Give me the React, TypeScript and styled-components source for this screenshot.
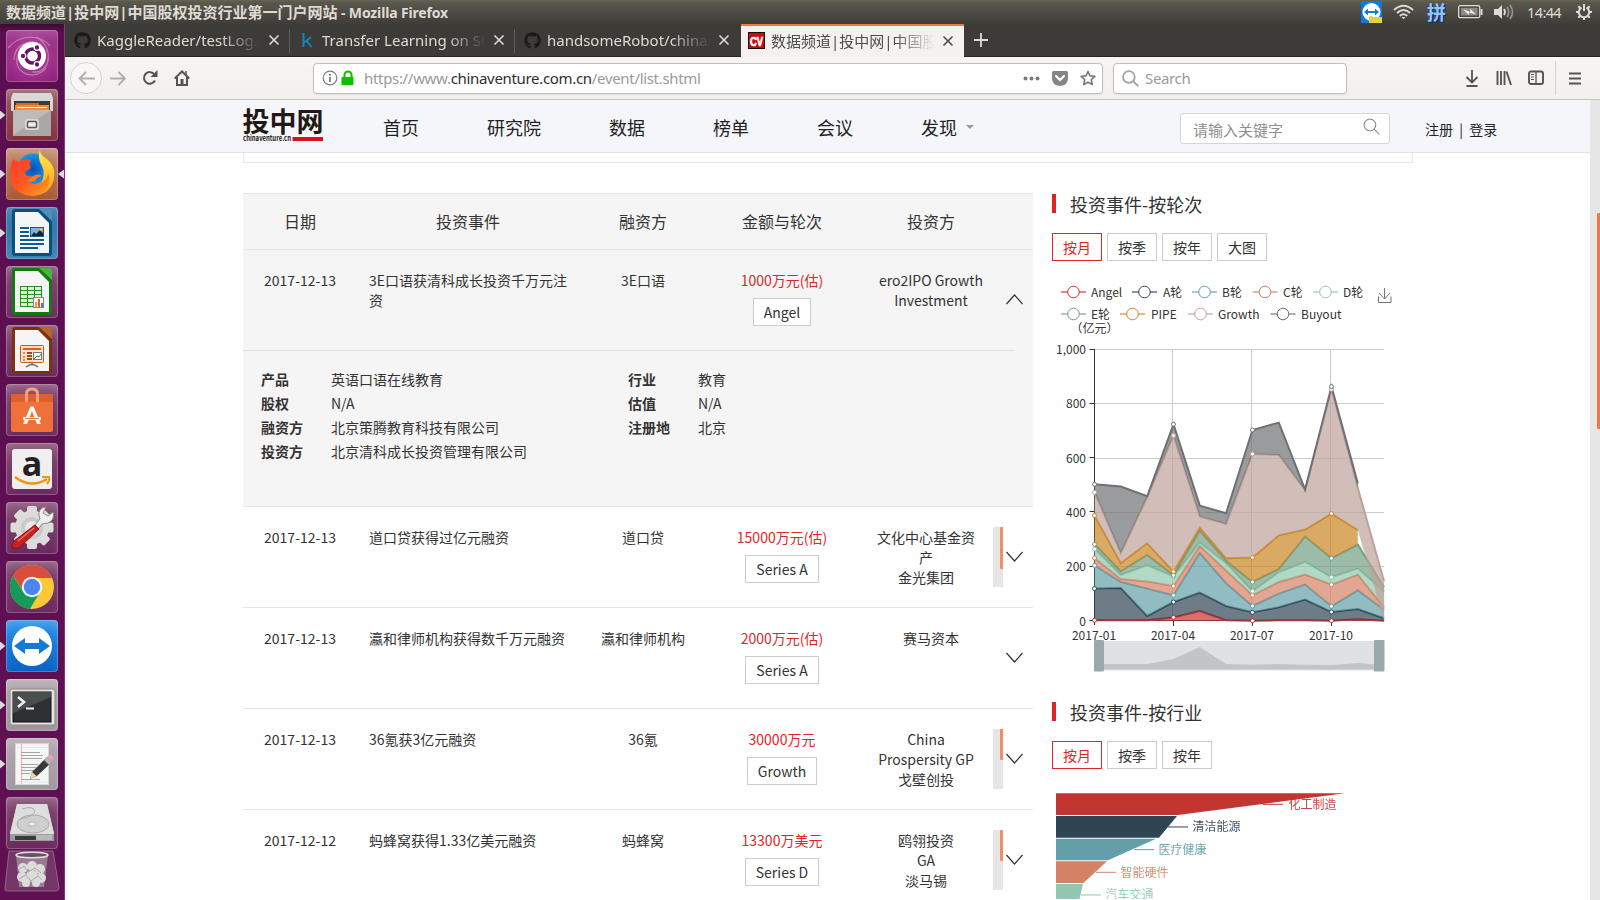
import React from "react";
import styled, { createGlobalStyle } from "styled-components";
import { FaGithub } from "react-icons/fa";

const webFont = `"Noto Sans CJK SC", "Noto Sans", sans-serif`;
const uiFont = `"Noto Sans", "Noto Sans CJK SC", sans-serif`;

const GlobalStyle = createGlobalStyle`
  * { box-sizing: border-box; }
  body { margin: 0; overflow: hidden; background: #fff; font-family: ${webFont}; color: #333; }
  ul, dl, dd, h2 { margin: 0; padding: 0; list-style: none; }
  svg { display: block; flex: none; }
`;

const Desktop = styled.div`
  width: 1600px;
  height: 900px;
  display: flex;
  flex-direction: column;
  overflow: hidden;
`;

/* ---------- system panel ---------- */

const Panel = styled.header`
  height: 24px;
  flex: none;
  display: flex;
  align-items: center;
  justify-content: space-between;
  padding: 0 8px 0 6px;
  background: linear-gradient(#68654f 0, #5b5850 2px, #3f3d38 100%);
  color: #dfdbd2;
  font-family: ${uiFont};
`;

const WindowTitle = styled.div`
  font-size: 15px;
  font-weight: 700;
  line-height: 24px;
  white-space: pre;
`;

const TitleLatin = styled.span`
  font-size: 14px;
  letter-spacing: -0.15px;
`;

const Tray = styled.div`
  display: flex;
  align-items: center;
  height: 24px;
`;

const TrayItem = styled.div<{ $gap: number }>`
  margin-left: ${(p) => p.$gap}px;
  display: flex;
`;

const InputMethod = styled.span`
  font: 700 19px/22px "Noto Sans CJK SC", sans-serif;
  color: #8cc6ff;
  text-shadow: 1px 1px 0 #0a2a80;
`;

const Clock = styled.span`
  font-size: 14.5px;
  line-height: 24px;
  letter-spacing: -0.6px;
  width: 36px;
`;

const Workspace = styled.div`
  flex: 1;
  display: flex;
  min-height: 0;
`;

/* ---------- launcher ---------- */

const Launcher = styled.nav`
  width: 65px;
  flex: none;
  display: flex;
  flex-direction: column;
  align-items: flex-start;
  gap: 7px;
  padding: 6px 0 0;
  background: linear-gradient(#3a0c33 0, #5c0f50 8px, #5f1053 100%);
  border-right: 1px solid #7d3b72;
`;

const LauncherSlot = styled.div`
  display: flex;
  align-items: center;
  width: 64px;
  height: 52px;
  flex: none;
`;

const RunningMark = styled.i<{ $on?: boolean; $right?: boolean }>`
  width: 6px;
  height: 9px;
  background: ${(p) => (p.$on ? "#dcdcdc" : "transparent")};
  clip-path: ${(p) => (p.$right ? "polygon(100% 0, 100% 100%, 0 50%)" : "polygon(0 0, 0 100%, 90% 50%)")};
`;

const Tile = styled.div<{ $bg: string }>`
  width: 52px;
  height: 52px;
  border-radius: 4px;
  background: ${(p) => p.$bg};
  box-shadow: inset 0 0 0 1px rgba(255, 255, 255, 0.22), inset 0 10px 14px -6px rgba(255, 255, 255, 0.28);
`;

const TrashTile = styled.div`
  width: 56px;
  height: 42px;
  margin: -6px 0 0 4px;
  flex: none;
`;

/* ---------- browser ---------- */

const Browser = styled.main`
  flex: 1;
  min-width: 0;
  display: flex;
  flex-direction: column;
  background: #fff;
`;

const TabStrip = styled.div`
  height: 33px;
  flex: none;
  display: flex;
  background: #3c3b37;
  border-bottom: 1px solid #262522;
  font-family: ${uiFont};
`;

const Tab = styled.div<{ $active?: boolean; $line?: boolean }>`
  position: relative;
  width: ${(p) => (p.$active ? 223 : 225)}px;
  height: ${(p) => (p.$active ? 33 : 32)}px;
  margin-left: ${(p) => (p.$active ? 1 : 0)}px;
  padding: ${(p) => (p.$active ? "0 0 0 7px" : "0 0 0 9px")};
  display: flex;
  align-items: center;
  background: ${(p) => (p.$active ? "#f3f2f0" : "transparent")};
  box-shadow: ${(p) => (p.$active ? "inset 0 2px 0 #f07746" : "none")};
  color: ${(p) => (p.$active ? "#4c4c4c" : "#dfdbd2")};
  &::after {
    content: "";
    display: ${(p) => (p.$line ? "block" : "none")};
    position: absolute;
    right: 0;
    top: 5px;
    width: 1px;
    height: 24px;
    background: #5f5e5a;
  }
`;

const TabLabel = styled.span<{ $spacing: number }>`
  width: 165px;
  margin-left: 6px;
  overflow: hidden;
  white-space: nowrap;
  font-size: 15px;
  line-height: 30px;
  letter-spacing: ${(p) => p.$spacing}px;
  mask-image: linear-gradient(90deg, #000 75%, transparent 99%);
`;

const TabClose = styled.span`
  margin-left: 6px;
`;

const NewTab = styled.span`
  padding: 9px 0 0 10px;
`;

const Toolbar = styled.div`
  height: 43px;
  flex: none;
  display: flex;
  align-items: center;
  padding: 0 9px 0 5px;
  background: linear-gradient(#f6f5f4, #f1f0ee);
  border-bottom: 1px solid #c9c6c0;
  font-family: ${uiFont};
`;

const BackButton = styled.span`
  width: 32px;
  height: 32px;
  border: 1px solid #d6d4d1;
  border-radius: 50%;
  background: #f8f7f6;
  display: grid;
  place-items: center;
`;

const ToolIcon = styled.span`
  width: 32px;
  height: 32px;
  display: grid;
  place-items: center;
`;

const Field = styled.div<{ $w: number; $ml: number }>`
  width: ${(p) => p.$w}px;
  height: 31px;
  margin-left: ${(p) => p.$ml}px;
  padding: 0 6px 0 8px;
  display: flex;
  align-items: center;
  background: #fff;
  border: 1px solid #c3c0ba;
  border-radius: 4px;
  box-shadow: 0 1px 2px rgba(0, 0, 0, 0.08);
  color: #9a9a9a;
  font-size: 15px;
`;

const Url = styled.span`
  flex: 1;
  margin-left: 10px;
  letter-spacing: -0.32px;
  b { font-weight: 400; color: #2e2e2e; }
`;

const FieldHint = styled.span`
  margin-left: 6px;
  letter-spacing: -0.35px;
`;

const FieldIcons = styled.span`
  display: flex;
  gap: 12px;
  align-items: center;
`;

const Spacer = styled.span`
  flex: 1;
`;

const ToolDivider = styled.span`
  width: 1px;
  height: 34px;
  margin: 0 3px 0 3px;
  background: #d5d3d0;
`;

/* ---------- web page ---------- */

const Viewport = styled.div`
  flex: 1;
  min-height: 0;
  display: flex;
`;

const Page = styled.div`
  flex: 1;
  min-width: 0;
  overflow: hidden;
`;

const PageScroll = styled.div`
  width: 10px;
  background: #e6e6e6;
  padding: 113px 0 0 7px;
`;

const PageScrollThumb = styled.div`
  height: 216px;
  background: #f07746;
  border-radius: 1px 0 0 1px;
`;

const SiteHeader = styled.div`
  height: 53px;
  display: flex;
  align-items: center;
  padding-left: 178px;
  background: #f5f6f9;
  border-bottom: 1px solid #e0e2e4;
`;

const Logo = styled.div`
  width: 80px;
  height: 34px;
  margin-top: -3px;
`;

const SiteNav = styled.ul`
  display: flex;
  gap: 68px;
  margin: 1px 0 0 60px;
  width: 797px;
  font-size: 18px;
  line-height: 26px;
  color: #222;
`;

const SiteNavItem = styled.li`
  display: flex;
  align-items: center;
  gap: 9px;
`;

const Caret = styled.i`
  border: 4px solid transparent;
  border-top-color: #999;
  border-bottom: 0;
`;

const SiteSearch = styled.div`
  width: 210px;
  height: 31px;
  margin-top: 4px;
  padding: 2px 9px 0 12px;
  display: flex;
  align-items: center;
  justify-content: space-between;
  border: 1px solid #d3d6d9;
  border-radius: 3px;
  background: #fff;
  font-size: 15px;
  color: #8f8f8f;
  svg { margin-top: -5px; }
`;

const Account = styled.div`
  margin: 6px 0 0 35px;
  font-size: 14px;
  color: #222;
  white-space: pre;
`;

const FilterBottom = styled.div`
  width: 1170px;
  height: 10px;
  margin-left: 178px;
  border: 1px solid #e6e6e6;
  border-top: 0;
`;

const Columns = styled.div`
  display: flex;
  gap: 19px;
  margin: 30px 0 0 178px;
`;

const cols = "114px 222px 128px 150px 148px 28px";

const Table = styled.section`
  width: 790px;
  flex: none;
  font-size: 14px;
  line-height: 20px;
`;

const HeadRow = styled.div`
  display: grid;
  grid-template-columns: ${cols};
  height: 57px;
  line-height: 54px;
  text-align: center;
  font-size: 16px;
  background: #f5f5f5;
  border-top: 1px solid #e6e6e6;
  border-bottom: 1px solid #e6e6e6;
`;

const EventItem = styled.article<{ $open?: boolean }>`
  background: ${(p) => (p.$open ? "#f5f5f5" : "#fff")};
  border-bottom: 1px solid #e6e6e6;
`;

const EventRow = styled.div`
  display: grid;
  grid-template-columns: ${cols};
  height: 100px;
  padding-top: 20px;
  text-align: center;
`;

const Cell = styled.div`
  letter-spacing: 0;
`;

const EventName = styled(Cell)`
  padding: 0 12px;
  text-align: left;
`;

const Amount = styled.div`
  display: flex;
  flex-direction: column;
  align-items: center;
  gap: 8px;
  color: #de2626;
`;

const Tag = styled.span`
  height: 28px;
  padding: 0 10px;
  line-height: 27px;
  border: 1px solid #ccc;
  background: #fff;
  color: #333;
`;

const InvestorBox = styled.div`
  display: flex;
  height: 60px;
  margin: 0 2px;
`;

const InvestorText = styled.div`
  flex: 1;
  padding: 0 12px;
`;

const MiniScroll = styled.div`
  width: 10px;
  padding-left: 7px;
  background: #e6e6e6;
`;

const MiniThumb = styled.div<{ $h: number }>`
  height: ${(p) => p.$h}px;
  background: #f28d65;
  border-radius: 1px 0 0 1px;
`;

const Toggle = styled.span`
  padding: 24px 0 0 1px;
`;

const Detail = styled.div`
  height: 156px;
  width: 772px;
  display: flex;
  padding: 16px 0 0 18px;
  border-top: 1px solid #dfdfdf;
  line-height: 24px;
`;

const DetailList = styled.dl`
  width: 367px;
`;

const DetailLine = styled.div`
  display: flex;
  dt { width: 70px; font-weight: 700; }
`;

const Aside = styled.aside`
  width: 345px;
`;

const SectionTitle = styled.h2<{ $top?: number }>`
  display: flex;
  align-items: center;
  gap: 14px;
  height: 22px;
  margin-top: ${(p) => p.$top ?? 0}px;
  font-size: 18px;
  font-weight: 400;
  &::before {
    content: "";
    width: 4px;
    height: 19px;
    margin-top: -1px;
    background: #e02222;
  }
`;

const Periods = styled.div`
  display: flex;
  gap: 5px;
  margin-top: 18px;
`;

const Period = styled.span<{ $on?: boolean }>`
  width: 50px;
  height: 28px;
  border: 1px solid ${(p) => (p.$on ? "#de2626" : "#ccc")};
  color: ${(p) => (p.$on ? "#de2626" : "#333")};
  font-size: 14px;
  line-height: 27px;
  text-align: center;
`;

/* ---------- launcher icons ---------- */

const office = (dark: string, light: string, body: React.ReactNode) => (
  <svg width="52" height="52" viewBox="0 0 52 52">
    <path d="M9 2H34L46 14V46Q46 49 43 49H9Q6 49 6 46V5Q6 2 9 2Z" fill={dark} />
    <path d="M9 5H32L43 16V46H9Z" fill="#f5f5f5" />
    <path d="M33 2H43Q46 2 46 5V14Z" fill={light} />
    {body}
  </svg>
);

const UbuntuIcon = () => (
  <svg width="52" height="52" viewBox="0 0 52 52">
    <g fill="none" stroke="#fff" strokeWidth="1.2" opacity=".35">
      <path d="M8 30C8 8 40 6 38 24" /><path d="M30 7C48 16 46 44 26 42" /><path d="M40 38C26 54 2 40 14 20" />
      <path d="M2 18C14 4 34 4 44 16" />
    </g>
    <circle cx="26" cy="26" r="14" fill="#fff" />
    <circle cx="26.5" cy="26" r="7" fill="none" stroke="#6a1460" strokeWidth="3.4" />
    <g fill="#6a1460" stroke="#fff" strokeWidth="1.3">
      <circle cx="17" cy="26" r="2.8" /><circle cx="31" cy="17.5" r="2.8" /><circle cx="31" cy="34.5" r="2.8" />
    </g>
  </svg>
);

const FilesIcon = () => (
  <svg width="52" height="52" viewBox="0 0 52 52">
    <path d="M7 4H45L47 9V22H5V9Z" fill="#d9d8d6" />
    <path d="M8 12H44V22H8Z" fill="#3b3a38" />
    <path d="M10 14H33V17H10Z" fill="#c96a2a" /><path d="M9 16H43V22H9Z" fill="#f08a3c" /><path d="M11 18H41V19H11Z" fill="#fff" />
    <path d="M7 21H45V47H7Z" fill="#a9a8a6" />
    <path d="M7 21H45L7 46Z" fill="#bdbcba" />
    <rect x="19" y="30" width="14" height="11" rx="2" fill="#d9d8d6" />
    <rect x="21.5" y="32.5" width="9" height="6" rx="1" fill="#eee" stroke="#555" strokeWidth="1.5" />
  </svg>
);

const FirefoxIcon = () => (
  <svg width="52" height="52" viewBox="0 0 52 52">
    <defs>
      <linearGradient id="ffBody" x1="0" y1="0" x2="1" y2="1">
        <stop offset="0" stopColor="#ff3b30" /><stop offset=".5" stopColor="#ff5a1f" /><stop offset="1" stopColor="#ffb01f" />
      </linearGradient>
      <linearGradient id="ffTail" x1="0" y1="0" x2="0" y2="1">
        <stop offset="0" stopColor="#fff04a" /><stop offset="1" stopColor="#ff9a1f" />
      </linearGradient>
      <radialGradient id="ffGlobe"><stop offset="0" stopColor="#0a4fb5" /><stop offset="1" stopColor="#1795e8" /></radialGradient>
    </defs>
    <circle cx="27" cy="21" r="15.5" fill="url(#ffGlobe)" />
    <path d="M7 11Q10 13 12 14Q18 10 25 12Q22 15 25 20L19 24Q18 27 22 28L29 29Q26 34 21 33Q28 39 36 33Q42 26 36 14Q45 20 48 30Q45 47 26 48Q5 46 4 28Q4 18 7 11Z" fill="url(#ffBody)" />
    <path d="M34 2Q31 10 36 18Q40 26 35 35Q42 32 42 25Q46 36 38 45Q50 37 48 22Q46 14 38 9Q34 6 34 2Z" fill="url(#ffTail)" />
    <path d="M24 30Q32 24 36 28Q31 29 29 33Q25 35 21 33Z" fill="#ff7a1f" />
  </svg>
);

const WriterIcon = () =>
  office("#0b4f80", "#4a8fbd",
    <>
      <g fill="#0b5c8f">
        <path d="M14 20h9v2h-9zM14 24h9v2h-9zM14 28h9v2h-9zM14 32h24v2h-24zM14 36h24v2h-24zM14 40h18v2h-18z" />
      </g>
      <rect x="24.5" y="20.500" width="13" height="9" fill="#7fb5e0" stroke="#0b5c8f" />
      <path d="M25 29L28 25L30 27L34 23L37 26V29Z" fill="#222" /><circle cx="35" cy="22.500" r="1.300" fill="#f6c945" />
    </>
  );

const CalcIcon = () =>
  office("#117a12", "#49b33f",
    <>
      <rect x="14.500" y="20.500" width="21" height="20" fill="#d9f0cf" stroke="#2b8a22" />
      <path d="M14 24.500H36M14 28.500H36M14 32.500H36M14 36.500H36M21.500 20V41M28.500 20V41" stroke="#2b8a22" />
      <rect x="27.500" y="31.500" width="10" height="10" fill="#fff" stroke="#888" />
      <path d="M29 36h2v5h-2z" fill="#f0a020" /><path d="M32 33h2v8h-2z" fill="#e06010" /><path d="M35 37h2v4h-2z" fill="#2f7fd0" />
    </>
  );

const ImpressIcon = () =>
  office("#7a330c", "#b5642c",
    <>
      <rect x="14.500" y="20.500" width="23" height="17" rx="1" fill="#f6e3d0" stroke="#c25a1a" />
      <path d="M17 23h18v2h-18z" fill="#d9601a" />
      <path d="M17 27h2v2h-2zM17 31h2v2h-2zM17 34h2v2h-2z" fill="#e08a50" />
      <path d="M21 27h5v2h-5zM21 30h5v2h-5zM21 33h5v2h-5z" fill="#a34a12" />
      <rect x="27.500" y="27.500" width="8" height="7" fill="#fff" stroke="#777" /><path d="M28 34L31 31L33 32L35 29" stroke="#2b9a3a" fill="none" />
      <path d="M26 38V40M20 42Q26 37 32 42" stroke="#666" strokeWidth="1.500" fill="none" />
    </>
  );

const SoftwareIcon = () => (
  <svg width="52" height="52" viewBox="0 0 52 52">
    <path d="M5 10H47V46Q47 48 45 48H7Q5 48 5 46Z" fill="#f0703a" />
    <path d="M5 10H47V18H5Z" fill="#e25f2c" />
    <path d="M20.500 18V10Q20.500 5 26 5Q31.500 5 31.500 10V18" fill="none" stroke="#f5a37f" strokeWidth="3" />
    <path d="M17 40L24.500 22.500H27.500L35 40H31L26 27L21 40Z" fill="#fff" />
    <path d="M17 33H35V36H17Z" fill="#fff" /><path d="M19 34H33V35H19Z" fill="#f0703a" />
  </svg>
);

const AmazonIcon = () => (
  <svg width="52" height="52" viewBox="0 0 52 52">
    <rect x="6" y="6" width="40" height="40" rx="3" fill="#efefef" />
    <text x="26" y="33" textAnchor="middle" fontFamily="'Open Sans', sans-serif" fontWeight="700" fontSize="34" fill="#222">a</text>
    <path d="M9 34Q25 46 41 36" fill="none" stroke="#f79400" strokeWidth="2.500" />
    <path d="M36 34H43Q44 37 41 41" fill="none" stroke="#f79400" strokeWidth="2" />
  </svg>
);

const SettingsIcon = () => (
  <svg width="52" height="52" viewBox="0 0 52 52">
    <g fill="#dcdcdc">
      {[0, 45, 90, 135].map((a) => (
        <rect key={a} x="21" y="4" width="10" height="43" rx="2" transform={`rotate(${a} 26 25.500)`} />
      ))}
      <circle cx="26" cy="25.500" r="17" />
    </g>
    <circle cx="26" cy="26" r="11" fill="#c9c9c9" /><circle cx="26" cy="26" r="7" fill="#e8e8e8" />
    <path d="M27 25L34 17Q31 10 36 6L40 5L37 11L42 14L47 10Q49 18 42 21L36 22L31 29Z" fill="#eee" stroke="#8d8d8d" />
    <path d="M29 23L33 27L13 46Q9 48 6 45Q5 42 8 39Z" fill="#c81f1f" stroke="#8f1010" />
    <path d="M12 39L28 26" stroke="#ef7070" strokeWidth="1.500" />
  </svg>
);

const ChromeIcon = () => (
  <svg width="52" height="52" viewBox="0 0 52 52">
    <circle cx="26" cy="26" r="22" fill="#fbc83a" />
    <path d="M6.900 15A22 22 0 0 1 45.100 15L46 17H26A9 9 0 0 0 18 30Z" fill="#d94d3d" />
    <path d="M6.900 15A22 22 0 0 0 24 48L34 31A9 9 0 0 1 18 31Z" fill="#159a5b" />
    <circle cx="26" cy="26" r="10.200" fill="#f4f4f4" /><circle cx="26" cy="26" r="8.200" fill="#4a86ee" />
  </svg>
);

const TeamViewerIcon = ({ size = 52 }: { size?: number }) => (
  <svg width={size} height={size} viewBox="0 0 52 52">
    <circle cx="26" cy="26" r="20" fill="#fff" />
    <path d="M8 26L19 18V23H33V18L44 26L33 34V29H19V34Z" fill="#1579d8" />
  </svg>
);

const TerminalIcon = () => (
  <svg width="52" height="52" viewBox="0 0 52 52">
    <rect x="4" y="10" width="45" height="36" rx="2" fill="#e4e2e0" stroke="#8d8a88" />
    <rect x="7" y="13" width="38" height="30" fill="#2e3132" stroke="#111" />
    <path d="M7 13H45V18L7 34Z" fill="#4a4e4f" />
    <path d="M12 18L18 23L12 28" fill="none" stroke="#f0f0f0" strokeWidth="2.500" /><path d="M20 29.500H28" stroke="#f0f0f0" strokeWidth="2" />
  </svg>
);

const EditorIcon = () => (
  <svg width="52" height="52" viewBox="0 0 52 52">
    <rect x="9.500" y="5.500" width="33" height="41" fill="#f6f6f4" stroke="#d8d6d6" />
    <path d="M15.500 6V46" stroke="#f3aaaa" /><path d="M11 9.500H42M11 44H42" stroke="#dbe8f5" />
    <path d="M15 14.500H34M15 17.500H37M15 20.500H36M15 26.500H32M15 29.500H30M15 32.500H28M15 35.500H24M15 41.500H34" stroke="#a5a5a5" />
    <path d="M24 41L26 34L41 19L46 24L31 38Z" fill="#3a3a3a" /><path d="M24 41L26 34L30.500 38Z" fill="#e8d9a0" />
    <path d="M38 22L41 19L46 24L43 27Z" fill="#b5b5b5" /><path d="M41 19L43 17Q45 16 47 19Q48 21 46 24Z" fill="#e8a0c0" />
  </svg>
);

const DiskIcon = () => (
  <svg width="52" height="52" viewBox="0 0 52 52">
    <path d="M11 7H41L48 36V44H4V36Z" fill="#c4c4c4" />
    <path d="M11 7H41L48 37H4Z" fill="#dedede" />
    <ellipse cx="27" cy="27" rx="16" ry="9" fill="#cfcfcf" stroke="#aaa" /><ellipse cx="26" cy="27" rx="4" ry="2.200" fill="#eee" stroke="#aaa" />
    <path d="M16 12Q28 8 29 15Q26 20 14 22" fill="none" stroke="#aaa" />
    <path d="M4 37H48V44H4Z" fill="#9c9c9c" /><path d="M9 39H38V43H9Z" fill="#3b3b3b" /><path d="M30 38H46V43H30Z" fill="#b9b9b9" />
  </svg>
);

const TrashIcon = () => (
  <svg width="56" height="42" viewBox="0 0 56 42">
    <path d="M5 1H49L55 38Q55 41 52 41H3Q0 41 1 38Z" fill="#743567" stroke="#95628c" />
    <path d="M12 5H44L40 37H15Z" fill="#9b7a94" />
    <g fill="#dcdcdc">
      <circle cx="19" cy="18" r="5" /><circle cx="28" cy="16" r="5" /><circle cx="36" cy="19" r="5" /><circle cx="18" cy="27" r="5" />
      <circle cx="28" cy="26" r="6" /><circle cx="37" cy="28" r="5" /><circle cx="22" cy="33" r="4" /><circle cx="32" cy="33" r="4" />
    </g>
    <path d="M14 20L20 16L24 22L31 18L37 23M15 29L22 25L27 31L34 26L38 30" fill="none" stroke="#a9a9a9" />
    <ellipse cx="28" cy="5" rx="16" ry="2.800" fill="#6a5065" stroke="#e2dde0" strokeWidth="1.500" />
  </svg>
);

const plain = "linear-gradient(#80476f, #6b2a60)";
const apps = [
  { bg: "radial-gradient(#b54aa0, #8b1c78)", Icon: UbuntuIcon },
  { bg: "linear-gradient(#93565e, #83303c)", Icon: FilesIcon, run: true },
  { bg: "linear-gradient(#bf8a6a, #a85a35)", Icon: FirefoxIcon, run: true, active: true },
  { bg: "linear-gradient(#2c6f9f, #4184b2)", Icon: WriterIcon, run: true },
  { bg: plain, Icon: CalcIcon },
  { bg: plain, Icon: ImpressIcon },
  { bg: plain, Icon: SoftwareIcon },
  { bg: plain, Icon: AmazonIcon },
  { bg: plain, Icon: SettingsIcon },
  { bg: plain, Icon: ChromeIcon },
  { bg: "linear-gradient(#2490ea, #0a62c4)", Icon: TeamViewerIcon, run: true },
  { bg: "linear-gradient(#b0a5ad, #a0929d)", Icon: TerminalIcon, run: true },
  { bg: "linear-gradient(#b0a5ad, #a39aa1)", Icon: EditorIcon, run: true },
  { bg: plain, Icon: DiskIcon },
];

/* ---------- small glyphs ---------- */

const Cross = ({ color }: { color: string }) => (
  <svg width="12" height="12" viewBox="0 0 12 12"><path d="M1.500 1.500L10.500 10.500M10.500 1.500L1.500 10.500" stroke={color} strokeWidth="1.600" /></svg>
);

const Magnifier = ({ size, color, w }: { size: number; color: string; w: number }) => (
  <svg width={size} height={size} viewBox="0 0 16 16" fill="none" stroke={color} strokeWidth={w}>
    <circle cx="6.500" cy="6.500" r="5.500" /><path d="M10.500 10.500L15.300 15.300" />
  </svg>
);

const Chevron = ({ up }: { up?: boolean }) => (
  <svg width="17" height="11" viewBox="0 0 17 11"><path d={up ? "M.5 10L8.500 1L16.500 10" : "M.5 1L8.500 10L16.500 1"} fill="none" stroke="#333" strokeWidth="1.200" /></svg>
);

/* ---------- charts ---------- */

const X0 = 42.5;
const STEP = 26.33;
const BASE = 272;

type Series = { name: string; color: string; y: number[] };

// pixel heights above the chart baseline, one value for each month
const series: Series[] = [
  { name: "Angel", color: "#c23531", y: [0.7, 0.7, 0.7, 3.6, 10, 0.7, 0.3, 0.7, 0.7, 0.3, 1.7, 0.3] },
  { name: "A轮", color: "#2f4554", y: [32.4, 33, 5, 19, 28.4, 15, 8.7, 13.7, 21.4, 9, 12, 2.7] },
  { name: "B轮", color: "#61a0a8", y: [55.6, 39, 32.4, 25.7, 68, 37.7, 15, 27.4, 36.4, 14.7, 30.7, 11] },
  { name: "C轮", color: "#d48265", y: [63, 42, 39.4, 35, 75, 50.4, 25.7, 39, 46.4, 36.4, 46.4, 13.7] },
  { name: "D轮", color: "#91c7ae", y: [72, 46, 55.7, 44.4, 78.4, 57.7, 29.7, 48.7, 59, 43.7, 52.4, 29.4] },
  { name: "E轮", color: "#749f83", y: [76.7, 49.7, 66, 45.7, 90.4, 60, 39, 52, 84.4, 62.7, 76.4, 33.7] },
  { name: "PIPE", color: "#ca8622", y: [105.4, 58, 77.7, 49.4, 93.4, 62.7, 63.4, 85.7, 91.4, 107.4, 91] },
  { name: "Growth", color: "#bda29a", y: [128.7, 67.7, 123.7, 185.4, 104.4, 97, 167, 166, 130.7, 231.7, 133, 39.4] },
  { name: "Buyout", color: "#6e7074", y: [136.7, 134.4, 124.7, 196.7, 115.4, 107.7, 191, 198.4, 131.4, 234.4, 137.7] },
];

const px = (i: number) => X0 + i * STEP;
const line = (y: number[]) => y.map((v, i) => `${px(i).toFixed(1)},${(BASE - v).toFixed(1)}`);

const legend: [number, number, number][] = [
  [9, 15, 39], [80, 15, 111], [140, 15, 170], [200.500, 15, 231], [261, 15, 291],
  [9, 37, 39], [68, 37, 99], [136, 37, 166], [218.500, 37, 249],
];

const RoundChart = () => (
  <svg width="345" height="405" viewBox="0 0 345 405" fontFamily={webFont} fontSize="12" fill="#333">
    {series.map((s, i) => {
      const [x, y, tx] = legend[i];
      return (
        <g key={s.name}>
          <path d={`M${x} ${y}H${x + 25}`} stroke={s.color} strokeWidth="1.500" opacity=".75" />
          <circle cx={x + 12.5} cy={y} r="5.800" fill="#fff" stroke={s.color} strokeWidth="1" />
          <text x={tx} y={y + 4.5}>{s.name}</text>
        </g>
      );
    })}
    <path d="M332.500 11V22M327 16L332.500 22L338 16M326.500 19.500V25.500H339V19.500" fill="none" stroke="#777" />
    <text x="42.500" y="55.500" textAnchor="middle">（亿元）</text>
    <g transform="translate(0 72)">
      {[0, 54.5, 109, 163.5, 217.5].map((y) => <path key={y} d={`M43 ${Math.floor(y) + 0.5}H332`} stroke="#ccc" />)}
      {[3, 6, 9].map((i) => <path key={i} d={`M${Math.round(px(i)) + 0.5 - 1} 0V272`} stroke="#ccc" />)}
      {["1,000", "800", "600", "400", "200", "0"].map((t, i) => (
        <g key={t}>
          <path d={`M37.500 ${Math.min(271.5, Math.floor(i * 54.3) + 0.5)}H42`} stroke="#333" />
          <text x="34" y={i * 54.3 + 5} textAnchor="end">{t}</text>
        </g>
      ))}
      <path d="M42.500 0V276" stroke="#333" />
      <path d="M42 271.500H332" stroke="#333" />
      {[3, 6, 9].map((i) => <path key={i} d={`M${px(i)} 272V277`} stroke="#333" />)}
      {["2017-01", "2017-04", "2017-07", "2017-10"].map((t, i) => (
        <text key={t} x={px(i * 3) - 0.5} y="291" textAnchor="middle">{t}</text>
      ))}
      {series.map((s, i) => {
        const below = i ? series[i - 1].y : s.y.map(() => 0);
        const floor = s.y.map((_, k) => below[k] ?? 0);
        return (
          <g key={s.name}>
            <polygon points={[...line(s.y), ...line(floor).reverse()].join(" ")} fill={s.color} opacity=".7" />
            <polyline points={line(s.y).join(" ")} fill="none" stroke={s.color} strokeWidth="2" />
          </g>
        );
      })}
      {series.map((s) =>
        [0, 3, 6, 9].map((k) => (
          <circle key={s.name + k} cx={px(k)} cy={BASE - s.y[k]} r="2" fill="#fff" stroke={s.color} strokeWidth="1" />
        ))
      )}
    </g>
    <g transform="translate(0 363)">
      <path d="M42.500 1H332V30.500H42.500Z" fill="#dee2e5" />
      <path d="M42.500 29.500V24H95.200L121.500 19L147.800 7L174 24L200 24.700L227 24L253 24.700L280 25L306 23L332 25V29.500Z" fill="#c1c5c8" />
      <rect x="42" y="0" width="10" height="31.500" rx="1" fill="#9aa9a9" /><rect x="322" y="0" width="10.500" height="31.500" rx="1" fill="#9aa9a9" />
    </g>
  </svg>
);

const funnel = [
  { t: "化工制造", c: "#c23531", a: 293, b: 126, l: 211, x: 237 },
  { t: "清洁能源", c: "#2f4554", a: 125, b: 107, l: 116, x: 141 },
  { t: "医疗健康", c: "#61a0a8", a: 104, b: 56, l: 82, x: 107 },
  { t: "智能硬件", c: "#d48265", a: 55, b: 31.500, l: 44, x: 69 },
  { t: "汽车交通", c: "#91c7ae", a: 31, b: 26, l: 29, x: 54 },
];

const IndustryChart = () => (
  <svg width="345" height="130" viewBox="0 0 345 130" fontFamily={webFont} fontSize="12">
    {funnel.map((f, i) => {
      const y = 24.3 + i * 22.67;
      return (
        <g key={f.t} fill={f.c}>
          <path d={`M4 ${y}H${f.a}L${f.b} ${y + 21.7}H4Z`} />
          <path d={`M${f.l} ${y + 11}H${f.l + 20}`} stroke={f.c} strokeWidth="1" />
          <text x={f.x - 0.5} y={y + 15.5} opacity=".9">{f.t}</text>
        </g>
      );
    })}
  </svg>
);

/* ---------- data ---------- */

type Ev = { date: string; name: string; target: string; amount: string; round: string; investors: string[]; bar?: number; open?: boolean };

const events: Ev[] = [
  { date: "2017-12-13", name: "3E口语获清科成长投资千万元注资", target: "3E口语", amount: "1000万元(估)", round: "Angel", investors: ["ero2IPO Growth Investment"], open: true },
  { date: "2017-12-13", name: "道口贷获得过亿元融资", target: "道口贷", amount: "15000万元(估)", round: "Series A", investors: ["文化中心基金资产", "金光集团"], bar: 42 },
  { date: "2017-12-13", name: "瀛和律师机构获得数千万元融资", target: "瀛和律师机构", amount: "2000万元(估)", round: "Series A", investors: ["赛马资本"] },
  { date: "2017-12-13", name: "36氪获3亿元融资", target: "36氪", amount: "30000万元", round: "Growth", investors: ["China Prospersity GP", "戈壁创投"], bar: 31 },
  { date: "2017-12-12", name: "蚂蜂窝获得1.33亿美元融资", target: "蚂蜂窝", amount: "13300万美元", round: "Series D", investors: ["鸥翎投资", "GA", "淡马锡"], bar: 31 },
];

const detailLeft = [["产品", "英语口语在线教育"], ["股权", "N/A"], ["融资方", "北京策腾教育科技有限公司"], ["投资方", "北京清科成长投资管理有限公司"]];
const detailRight = [["行业", "教育"], ["估值", "N/A"], ["注册地", "北京"]];

const Facts = ({ rows }: { rows: string[][] }) => (
  <DetailList>
    {rows.map(([k, v]) => <DetailLine key={k}><dt>{k}</dt><dd>{v}</dd></DetailLine>)}
  </DetailList>
);

export default function App() {
  return (
    <Desktop>
      <GlobalStyle />
      <Panel>
        <WindowTitle>数据频道|投中网|中国股权投资行业第一门户网站<TitleLatin> - Mozilla Firefox</TitleLatin></WindowTitle>
        <Tray>
          <TrayItem $gap={0}>
            <svg width="21" height="22" viewBox="0 0 21 22">
              <rect width="21" height="22" fill="#0c7be0" /><circle cx="10.500" cy="11" r="9" fill="#fff" />
              <path d="M3 11L7 7.500V10H14V7.500L18 11L14 14.500V12H7V14.500Z" fill="#1579d8" />
              <path d="M8 16L10 14.500L12 16H21V22H8Z" fill="#e3cf45" />
            </svg>
          </TrayItem>
          <TrayItem $gap={11}>
            <svg width="21" height="16" viewBox="0 0 21 16" fill="none" stroke="#dfdbd2" strokeWidth="1.800">
              <path d="M1 6Q10.500 -2.500 20 6M4 9Q10.500 3 17 9M6.800 12Q10.500 8.500 14.200 12" /><path d="M8.500 13L10.500 15.200L12.500 13Z" fill="#dfdbd2" stroke="none" />
            </svg>
          </TrayItem>
          <TrayItem $gap={13}><InputMethod>拼</InputMethod></TrayItem>
          <TrayItem $gap={12}>
            <svg width="25" height="14" viewBox="0 0 25 14">
              <rect x=".7" y=".7" width="21" height="12" rx="1.500" fill="none" stroke="#dfdbd2" strokeWidth="1.300" />
              <rect x="3" y="3" width="16.500" height="7.500" fill="#8d8a82" /><path d="M22.500 4H24.500V10H22.500Z" fill="#dfdbd2" />
              <path d="M5 4L12 7L12.500 4L18 9.500L11 7.500L10.500 10Z" fill="#efece5" />
            </svg>
          </TrayItem>
          <TrayItem $gap={11}>
            <svg width="21" height="18" viewBox="0 0 21 18">
              <path d="M0 6H4L8 2V16L4 12H0Z" fill="#dfdbd2" /><path d="M10 6Q12 9 10 12" fill="none" stroke="#dfdbd2" strokeWidth="1.800" />
              <path d="M13 4Q16.500 9 13 14M16 2Q21 9 16 16" fill="none" stroke="#98958c" strokeWidth="1.600" />
            </svg>
          </TrayItem>
          <TrayItem $gap={12}><Clock>14:44</Clock></TrayItem>
          <TrayItem $gap={13}>
            <svg width="16" height="18" viewBox="0 0 16 18" fill="none" stroke="#dfdbd2">
              <path d="M5.500 4.500A5.200 5.200 0 1 0 10.500 4.500" strokeWidth="2" /><path d="M8 1V8" strokeWidth="2" />
              <path d="M8 14.500V17M0 9H2.500M13.500 9H16M2.300 3.300L4 5M13.700 3.300L12 5M2.300 14.700L4 13M13.700 14.700L12 13" strokeWidth="2" />
            </svg>
          </TrayItem>
        </Tray>
      </Panel>

      <Workspace>
        <Launcher>
          {apps.map(({ bg, Icon, run, active }, i) => (
            <LauncherSlot key={i}>
              <RunningMark $on={run} />
              <Tile $bg={bg}><Icon /></Tile>
              <RunningMark $on={active} $right />
            </LauncherSlot>
          ))}
          <TrashTile><TrashIcon /></TrashTile>
        </Launcher>

        <Browser>
          <TabStrip>
            <Tab $line>
              <FaGithub size={17} color="#1a1a19" />
              <TabLabel $spacing={0}>KaggleReader/testLog.csv</TabLabel>
              <TabClose><Cross color="#dfdbd2" /></TabClose>
            </Tab>
            <Tab $line>
              <svg width="17" height="18" viewBox="0 0 17 18"><path d="M4.500 2V16M12 6L5.500 11.500M7.500 9.500L12.500 16" fill="none" stroke="#1486b8" strokeWidth="2" /></svg>
              <TabLabel $spacing={0}>Transfer Learning on Stack</TabLabel>
              <TabClose><Cross color="#dfdbd2" /></TabClose>
            </Tab>
            <Tab>
              <FaGithub size={17} color="#1a1a19" />
              <TabLabel $spacing={0}>handsomeRobot/chinaventure</TabLabel>
              <TabClose><Cross color="#dfdbd2" /></TabClose>
            </Tab>
            <Tab $active>
              <svg width="17" height="17" viewBox="0 0 17 17">
                <rect width="17" height="17" fill="#111" /><rect x="1" y="1" width="15" height="15" fill="#cc0c0c" />
                <text x="8.500" y="13.500" textAnchor="middle" fontFamily="'Liberation Sans', sans-serif" fontSize="13" fontWeight="700" fill="#fff" stroke="#fff" strokeWidth=".7" textLength="13" lengthAdjust="spacingAndGlyphs">CV</text>
              </svg>
              <TabLabel $spacing={0}>数据频道|投中网|中国股权</TabLabel>
              <TabClose><Cross color="#4c4c4c" /></TabClose>
            </Tab>
            <NewTab><svg width="14" height="14" viewBox="0 0 14 14"><path d="M7 0V14M0 7H14" stroke="#dfdbd2" strokeWidth="1.800" /></svg></NewTab>
          </TabStrip>

          <Toolbar>
            <BackButton>
              <svg width="17" height="15" viewBox="0 0 17 15" fill="none" stroke="#b0afad" strokeWidth="1.800"><path d="M8 1L1.500 7.500L8 14M1.500 7.500H17" /></svg>
            </BackButton>
            <ToolIcon><svg width="16" height="15" viewBox="0 0 16 15" fill="none" stroke="#b0afad" strokeWidth="1.800"><path d="M8.500 1L15 7.500L8.500 14M15 7.500H0" /></svg></ToolIcon>
            <ToolIcon><svg width="16" height="16" viewBox="0 0 16 16" fill="none" stroke="#555452" strokeWidth="2"><path d="M13 10.500A5.800 5.800 0 1 1 12.500 4.500" /><path d="M15.500 0V7H8.500Z" fill="#555452" stroke="none" /></svg></ToolIcon>
            <ToolIcon><svg width="16" height="16" viewBox="0 0 16 16" fill="none" stroke="#555452" strokeWidth="2"><path d="M.7 8.500L8 1.500L15.300 8.500M3 7V15H13V7" /><path d="M8 9V15" strokeWidth="3" /><path d="M12 1V5" strokeWidth="1.500" /></svg></ToolIcon>
            <Field $w={790} $ml={115}>
              <svg width="16" height="16" viewBox="0 0 16 16" fill="none" stroke="#7d7d7d"><circle cx="8" cy="8" r="6.800" strokeWidth="1.200" /><path d="M8 7V12" strokeWidth="1.800" /><path d="M8 4V5.800" strokeWidth="1.800" /></svg>
              <svg width="16" height="16" viewBox="0 0 16 16"><path d="M5 8V5A3.500 3.500 0 0 1 12 5V8" fill="none" stroke="#12bc00" strokeWidth="2" transform="translate(1.500 0)" /><rect x="3.500" y="7" width="12" height="8" rx="1" fill="#12bc00" /></svg>
              <Url>https://www.<b>chinaventure.com.cn</b>/event/list.shtml</Url>
              <FieldIcons>
                <svg width="17" height="5" viewBox="0 0 17 5" fill="#7a7a7a"><circle cx="2.500" cy="2.500" r="2" /><circle cx="8.500" cy="2.500" r="2" /><circle cx="14.500" cy="2.500" r="2" /></svg>
                <svg width="16" height="15" viewBox="0 0 16 15"><path d="M1.500 0H14.500Q16 0 16 1.500V7Q16 14.500 8 15Q0 14.500 0 7V1.500Q0 0 1.500 0Z" fill="#858585" /><path d="M4 5L8 9L12 5" fill="none" stroke="#fff" strokeWidth="2" strokeLinecap="round" /></svg>
                <svg width="16" height="16" viewBox="0 0 16 16"><path d="M8 1.500L10 5.800L14.800 6.400L11.300 9.700L12.200 14.500L8 12.200L3.800 14.500L4.700 9.700L1.200 6.400L6 5.800Z" fill="none" stroke="#7a7a7a" strokeWidth="1.700" strokeLinejoin="round" /></svg>
              </FieldIcons>
            </Field>
            <Field $w={234} $ml={10}>
              <Magnifier size={17} color="#a3a3a3" w={1.7} />
              <FieldHint>Search</FieldHint>
            </Field>
            <Spacer />
            <ToolIcon><svg width="16" height="17" viewBox="0 0 16 17" fill="none" stroke="#555452" strokeWidth="1.800"><path d="M8 0V12M2.500 7L8 12.500L13.500 7M2.500 16H13.500" /></svg></ToolIcon>
            <ToolIcon><svg width="16" height="16" viewBox="0 0 16 16" fill="none" stroke="#555452" strokeWidth="1.900"><path d="M1.500 1V15M5 1V15M8.500 1V15M10.500 1.500L15 15" /></svg></ToolIcon>
            <ToolIcon><svg width="16" height="16" viewBox="0 0 16 16" fill="none" stroke="#555452" strokeWidth="1.900"><rect x="1" y="1.500" width="14" height="12.500" rx="2" /><path d="M8 1.500V14" strokeWidth="1.300" /><path d="M3 4.500H6M3 7H6M3 9.500H6" strokeWidth="1" /></svg></ToolIcon>
            <ToolDivider />
            <ToolIcon><svg width="12" height="13" viewBox="0 0 12 13" stroke="#555452" strokeWidth="2"><path d="M0 1.500H12M0 6.500H12M0 11.500H12" /></svg></ToolIcon>
          </Toolbar>

          <Viewport>
            <Page>
              <SiteHeader>
                <Logo>
                  <svg width="80" height="34" viewBox="0 0 80 34" fontFamily={webFont}>
                    <text x="-0.500" y="24" fontSize="27" fontWeight="700" fill="#231815" textLength="81" lengthAdjust="spacingAndGlyphs">投中网</text>
                    <text x="0" y="33" fontSize="8" fontWeight="700" fill="#231815" textLength="48" lengthAdjust="spacingAndGlyphs">chinaventure.cn</text>
                    <rect x="49.500" y="29" width="30.500" height="4" fill="#d7101b" />
                  </svg>
                </Logo>
                <SiteNav>
                  {["首页", "研究院", "数据", "榜单", "会议", "发现"].map((t) => (
                    <SiteNavItem key={t}>{t}{t === "发现" && <Caret />}</SiteNavItem>
                  ))}
                </SiteNav>
                <SiteSearch>请输入关键字<Magnifier size={17} color="#888" w={1} /></SiteSearch>
                <Account>注册  |  登录</Account>
              </SiteHeader>
              <FilterBottom />
              <Columns>
                <Table>
                  <HeadRow>
                    {["日期", "投资事件", "融资方", "金额与轮次", "投资方"].map((t) => <Cell key={t}>{t}</Cell>)}
                  </HeadRow>
                  {events.map((e) => (
                    <EventItem key={e.name} $open={e.open}>
                      <EventRow>
                        <Cell>{e.date}</Cell>
                        <EventName>{e.name}</EventName>
                        <Cell>{e.target}</Cell>
                        <Amount>{e.amount}<Tag>{e.round}</Tag></Amount>
                        <InvestorBox>
                          <InvestorText>{e.investors.map((n) => <div key={n}>{n}</div>)}</InvestorText>
                          {e.bar && <MiniScroll><MiniThumb $h={e.bar} /></MiniScroll>}
                        </InvestorBox>
                        <Toggle><Chevron up={e.open} /></Toggle>
                      </EventRow>
                      {e.open && (
                        <Detail>
                          <Facts rows={detailLeft} />
                          <Facts rows={detailRight} />
                        </Detail>
                      )}
                    </EventItem>
                  ))}
                </Table>
                <Aside>
                  <SectionTitle>投资事件-按轮次</SectionTitle>
                  <Periods>
                    <Period $on>按月</Period><Period>按季</Period><Period>按年</Period><Period>大图</Period>
                  </Periods>
                  <ChartSlot $top={16}><RoundChart /></ChartSlot>
                  <SectionTitle $top={19}>投资事件-按行业</SectionTitle>
                  <Periods>
                    <Period $on>按月</Period><Period>按季</Period><Period>按年</Period>
                  </Periods>
                  <ChartSlot $top={0}><IndustryChart /></ChartSlot>
                </Aside>
              </Columns>
            </Page>
            <PageScroll><PageScrollThumb /></PageScroll>
          </Viewport>
        </Browser>
      </Workspace>
    </Desktop>
  );
}

const ChartSlot = styled.div<{ $top: number }>`
  padding-top: ${(p) => p.$top}px;
`;
